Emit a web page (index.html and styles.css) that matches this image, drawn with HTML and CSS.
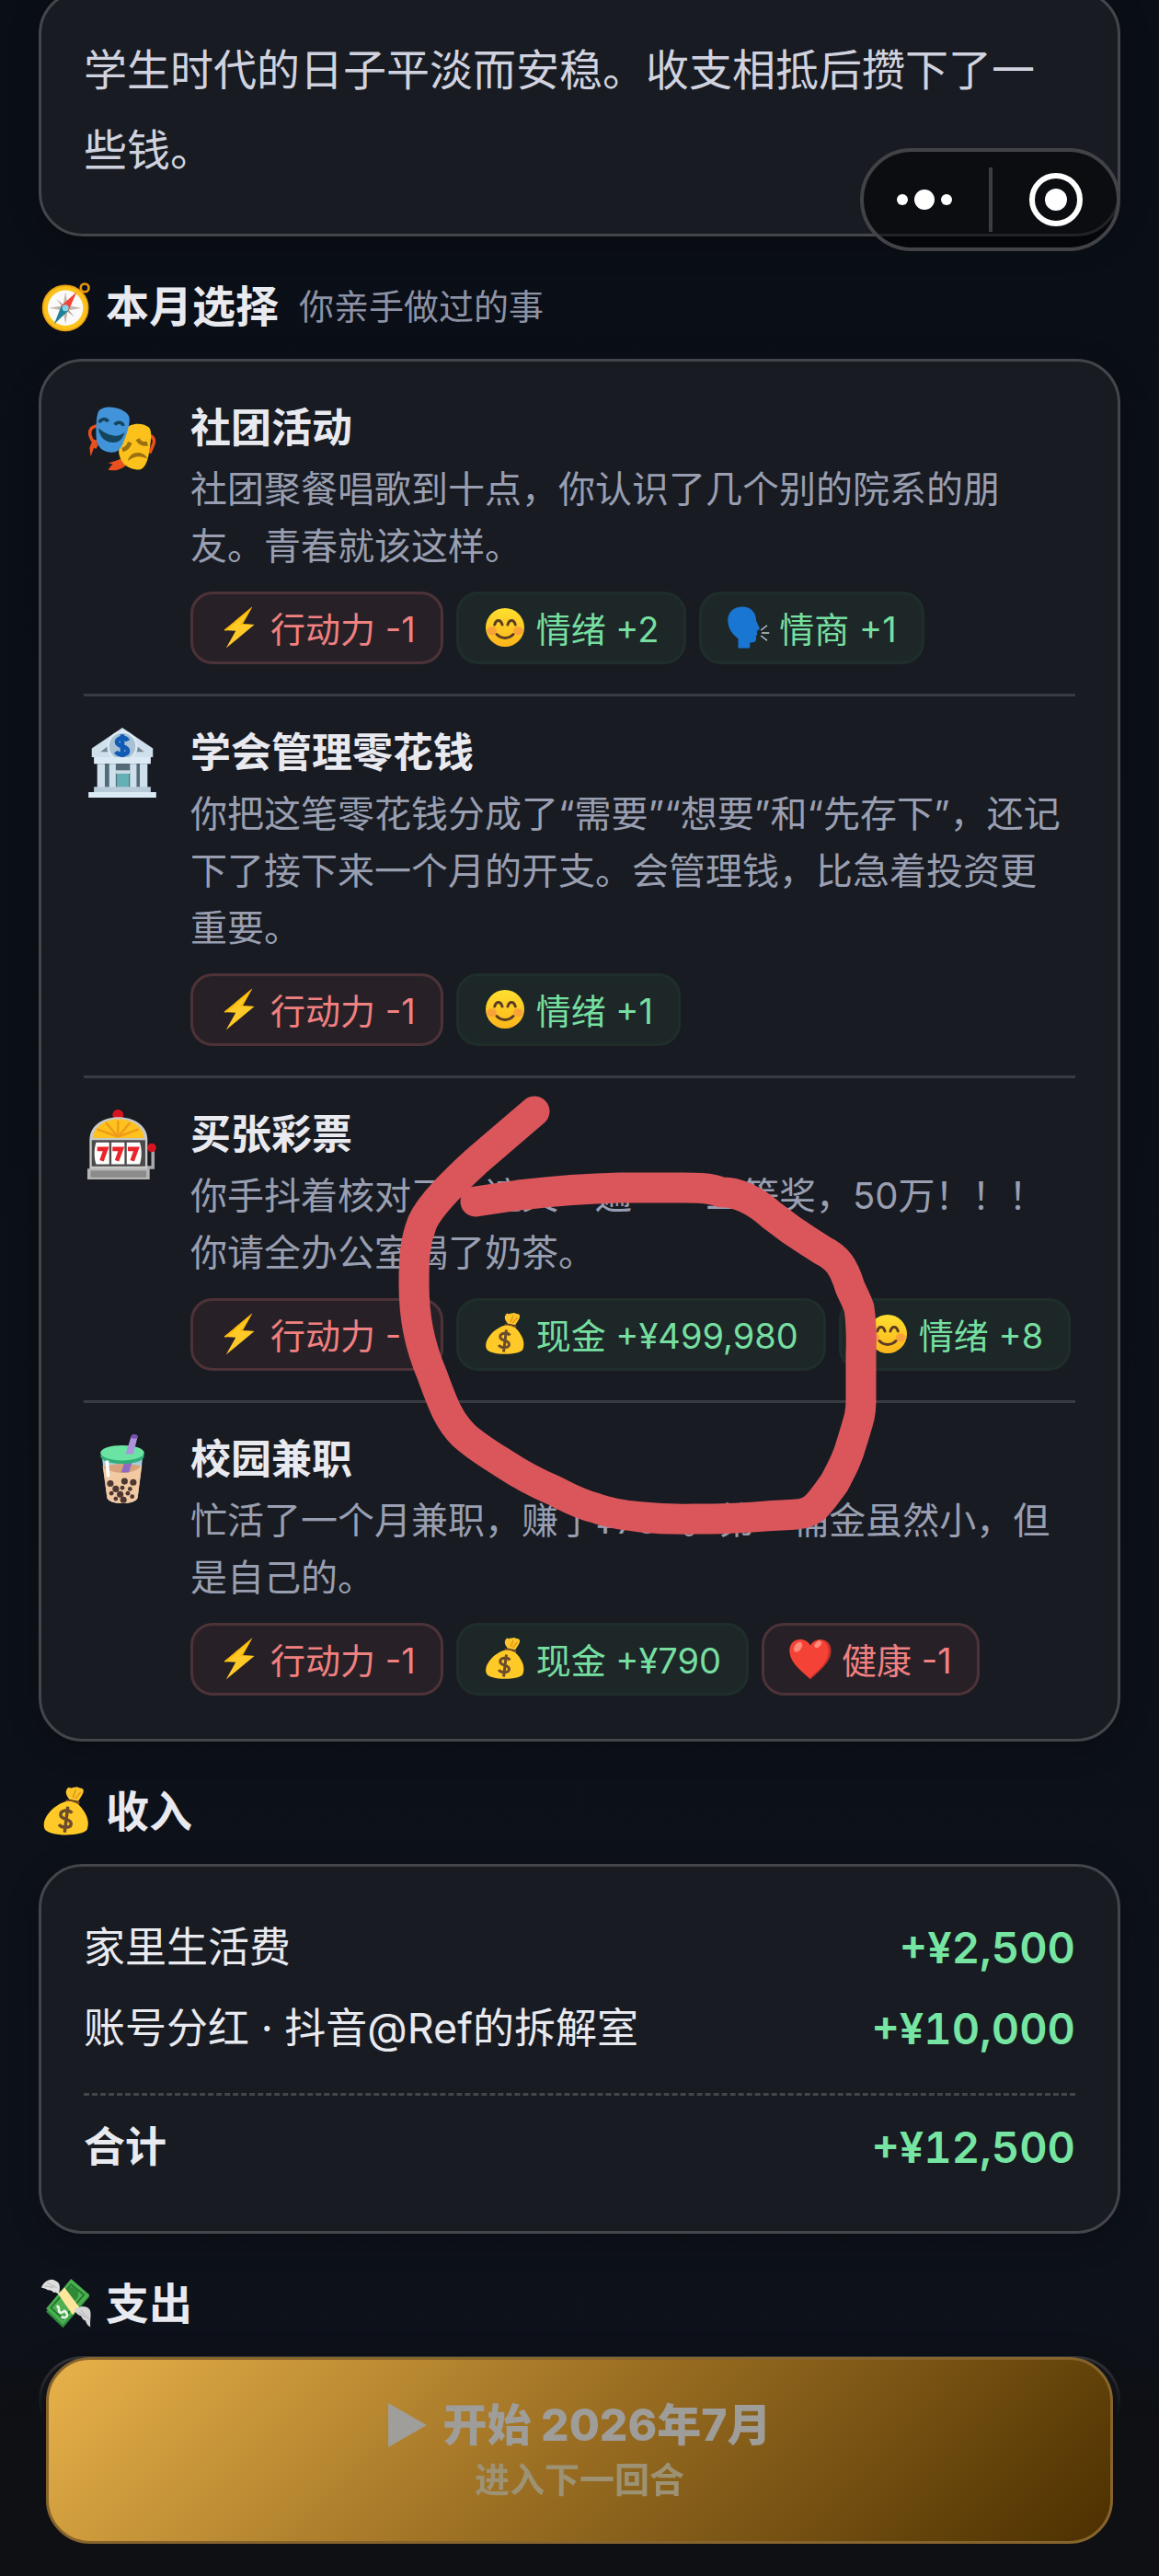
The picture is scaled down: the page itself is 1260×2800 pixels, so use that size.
FILE: index.html
```
<!DOCTYPE html>
<html lang="zh-CN">
<head>
    <meta charset="UTF-8">
    <meta name="viewport" content="width=device-width, initial-scale=1">
    <title>本月结算</title>
    <link rel="stylesheet" href="styles.css">
</head>
<body>
<!--图标-->
<svg class="sprite" aria-hidden="true">
    <defs>
        <linearGradient id="gold" x1="0" y1="0" x2="0" y2="1">
            <stop offset="0" stop-color="#ffdf2f"/>
            <stop offset="1" stop-color="#fbb41a"/>
        </linearGradient>
    </defs>
    <symbol id="i-compass" viewBox="0 0 64 64">
        <circle cx="55" cy="9" r="5" fill="none" stroke="#e8960c" stroke-width="3"/>
        <circle cx="31" cy="34" r="28" fill="#fcc21b"/>
        <circle cx="31" cy="34" r="28" fill="none" stroke="#eda312" stroke-width="2"/>
        <circle cx="31" cy="34" r="22" fill="#fafafa"/>
        <path d="M31 14l3 17 17 3-17 3-3 17-3-17-17-3 17-3z" fill="#c4b4a9"/>
        <path d="M20 23l10 8 1 3-3-1zM42 45l-8-10-3-1 1 3z" fill="#a99b92"/>
        <path d="M45 14L26 31l9 6z" fill="#f44336"/>
        <path d="M17 54l9-23 9 6z" fill="#1f8295"/>
        <circle cx="31" cy="34" r="4" fill="#82d5e8"/>
    </symbol>
    <symbol id="i-masks" viewBox="0 0 64 64">
        <path d="M10 21c-7 0-9 5-7 10 1 4 4 5 6 4M56 30c5 0 6 5 4 9l-3 7" fill="none" stroke="#e8501e" stroke-width="3"/>
        <path d="M5 33l5 5-2 4-2-1-3 8-1-8z" fill="#e8501e"/>
        <path d="M33 50c-5 2-10 4-14 5l4 1-4 5c6 2 12 0 18-5z" fill="#e8501e"/>
        <path d="M35 24c3-5 14-7 21-2 4 3 2 15 0 26-2 9-5 14-11 13-9-1-14-6-16-14-1-7 2-16 6-23z" fill="#fcc21b"/>
        <path d="M10 8c4-7 23-5 28 4 2 5-2 17-5 24-3 8-7 10-13 9-9-1-12-8-12-16 0-7 0-16 2-21z" fill="#4294da"/>
        <path d="M10 23c10 8 18 9 24 4-2 7-6 10-12 9-6 0-11-5-12-13z" fill="#15455e"/>
        <path d="M11 18c1-4 6-4 8-1M25 20c2-3 7-3 8 1" fill="none" stroke="#15455e" stroke-width="3"/>
        <path d="M32 43c4-1 6-4 7-7M46 33c2 4 6 5 9 4" fill="none" stroke="#9a7010" stroke-width="4"/>
        <path d="M37 53c2-9 14-10 18-2-6-3-12-3-18 2z" fill="#9a7010"/>
    </symbol>
    <symbol id="i-bank" viewBox="0 0 64 64">
        <path d="M32 0l28 19v8H4v-8z" fill="#cfdfec"/>
        <path d="M12 22l18-14v14zM52 22L34 8v14z" fill="#738793"/>
        <circle cx="32" cy="17" r="13" fill="#a8c2d3" stroke="#dcebf5" stroke-width="2"/>
        <path d="M37 12c-2-4-10-3-10 1 0 5 10 3 10 8 0 4-8 5-11 1M32 6v22" fill="none" stroke="#0f5bb5" stroke-width="4"/>
        <path d="M6 27h52v6H6z" fill="#dceaf5"/>
        <path d="M12 33h40v23H12z" fill="#546a76"/>
        <path d="M27 40h11v16H27z" fill="#63b0b5"/>
        <path d="M26 39h13v3H26z" fill="#c8dbe5"/>
        <path d="M9 33h7v23H9zM20 33h6v23h-6zM39 33h6v23h-6zM48 33h7v23h-7z" fill="#cfe0ed"/>
        <path d="M6 54h52v5H6z" fill="#b8cbd8"/>
        <path d="M1 59h62v5H1z" fill="#dceaf5"/>
    </symbol>
    <symbol id="i-slot" viewBox="0 0 64 64">
        <circle cx="28" cy="5" r="5" fill="#d8151f"/>
        <path d="M60 36v17h-8" fill="none" stroke="#a9a9a9" stroke-width="3"/>
        <circle cx="59" cy="35" r="4" fill="#d8151f"/>
        <path d="M2 28C2 0 55 0 55 28v28H2z" fill="#c9c9c9"/>
        <path d="M5 26c2-23 45-23 47 0z" fill="#fdc21d"/>
        <path d="M28 25V10M28 25L17 12M28 25l11-13M28 25L9 18M28 25l19-7" stroke="#f09a1a" stroke-width="2"/>
        <path d="M4 28h49v24H4z" fill="#4a4a4a"/>
        <path d="M8 30h12v20H8c-2-6-2-14 0-20zM22 30h12v20H22zM36 30h12c2 6 2 14 0 20H36z" fill="#fff"/>
        <path d="M9 36h8l-4 11M23 36h8l-4 11M37 36h8l-4 11" fill="none" stroke="#e9242a" stroke-width="4"/>
        <path d="M0 54h57v10H0z" fill="#b5b5b5"/>
        <path d="M3 56h51v6H3z" fill="#8b8b8b"/>
    </symbol>
    <symbol id="i-boba" viewBox="0 0 64 64">
        <path d="M13 18h38l-5 40c-2 7-26 7-28 0z" fill="#a5cde0"/>
        <path d="M14 29c12-3 26 3 36-1l-4 30c-2 7-26 7-28 0z" fill="#f2c9a2"/>
        <path d="M14 30c10-4 26-4 35-1-6 8-25 8-35 1z" fill="#d6a27c"/>
        <path d="M35 22h7l-4 13h-7z" fill="#8e6ac2"/>
        <ellipse cx="32" cy="20" rx="20" ry="7" fill="#2fae78"/>
        <ellipse cx="32" cy="17" rx="20" ry="7" fill="#6be3a2"/>
        <path d="M40 2h6l-4 16h-7z" fill="#ad93dc"/>
        <ellipse cx="43" cy="2" rx="3" ry="2" fill="#7a52b3"/>
        <path d="M18 24l1 15" stroke="#fff" stroke-width="3"/>
        <g fill="#4c3832">
            <circle cx="21" cy="45" r="3"/><circle cx="34" cy="43" r="3"/><circle cx="42" cy="44" r="3"/>
            <circle cx="26" cy="50" r="3"/><circle cx="32" cy="49" r="2"/><circle cx="39" cy="50" r="2"/>
            <circle cx="22" cy="54" r="2"/><circle cx="30" cy="55" r="3"/><circle cx="37" cy="54" r="2"/>
            <circle cx="26" cy="59" r="2"/><circle cx="33" cy="60" r="3"/><circle cx="41" cy="57" r="2"/>
        </g>
    </symbol>
    <symbol id="i-bolt" viewBox="0 0 64 64">
        <path d="M51 2L10 36l17 1-14 25 41-34-17-1z" fill="#ffca28"/>
        <path d="M51 2L10 36l3 1 34-29-14 20 21 0-17-1z" fill="#feb804"/>
    </symbol>
    <symbol id="i-smile" viewBox="0 0 64 64">
        <circle cx="32" cy="32" r="28" fill="url(#gold)"/>
        <ellipse cx="13" cy="37" rx="7" ry="6" fill="#f79344" opacity=".7"/>
        <ellipse cx="51" cy="37" rx="7" ry="6" fill="#f79344" opacity=".7"/>
        <path d="M17 28c2-8 9-8 11 0M36 28c2-8 9-8 11 0M20 42c7 7 17 7 24 0" fill="none" stroke="#5a3c24" stroke-width="4" stroke-linecap="round"/>
    </symbol>
    <symbol id="i-head" viewBox="0 0 64 64">
        <path d="M18 62V48C10 43 3 33 3 22 3 9 12 2 24 2s20 8 20 20l5 11c0 2-1 3-3 3l-1 3 1 3-2 2v5c0 4-3 5-9 5v8z" fill="#1976d2"/>
        <path d="M51 36l9-7M52 40h11M51 44l9 7" stroke="#c2c8cc" stroke-width="2"/>
    </symbol>
    <symbol id="i-bag" viewBox="0 0 64 64">
        <path d="M36 17C30 10 31 5 35 2c3 2 4 0 8 0 3-2 4 1 8 1 5 2 2 7-4 16z" fill="#fdc52b"/>
        <path d="M40 15l4-10M43 16l7-8" stroke="#e59b12" stroke-width="2"/>
        <path d="M32 17l17 3-2 5-17-3z" fill="#7a4a27"/>
        <path d="M30 20c6-2 11 0 17 3 9 9 15 20 11 31-3 9-49 10-53-1-4-12 10-28 25-33z" fill="#ffca28"/>
        <path d="M39 34c-3-5-14-4-14 2 0 7 13 4 13 11 0 6-12 6-15 1M34 26l-4 32" fill="none" stroke="#6d4c2b" stroke-width="4"/>
    </symbol>
    <symbol id="i-heart" viewBox="0 0 64 64">
        <path d="M32 62C21 51 2 38 2 20 2 1 25-1 32 13 39-1 62 1 62 20c0 18-19 31-30 42z" fill="#c9312b"/>
        <path d="M31 60C20 50 2 38 2 20 2 1 25-1 32 13 39 1 57 1 58 20c0 18-15 29-27 40z" fill="#f44336"/>
        <ellipse cx="14" cy="15" rx="5" ry="8" fill="#ff8a7a" transform="rotate(35 14 15)"/>
        <ellipse cx="43" cy="11" rx="4" ry="6" fill="#ff8a7a" transform="rotate(45 43 11)"/>
    </symbol>
    <symbol id="i-cash" viewBox="0 0 64 64">
        <path d="M7 42L38 3l23 20-33 39z" fill="#2e8b3c"/>
        <path d="M7 38L38 1l23 20-33 37z" fill="#4caf50"/>
        <path d="M13 37L38 8l16 13-26 30z" fill="none" stroke="#23772e" stroke-width="2"/>
        <ellipse cx="39" cy="20" rx="8" ry="9" fill="#2d8a38"/>
        <path d="M22 20l8-8 18 24-8 10z" fill="#fbe69b"/>
        <path d="M20 35c6 1 0 7 5 8s3-5 7 0-3 8-6 5" fill="none" stroke="#e8f5e9" stroke-width="3"/>
        <path d="M1 12c3-7 10-12 17-9 8 3 6 10 5 18-3-3-4-3-7-3-2-3-5-3-7-3-3-2-5-2-8-3z" fill="#e0e0e0"/>
        <path d="M42 40c6-6 15-6 19-1 3 5 0 13 1 22-4-2-5-5-6-8-4-1-4-4-6-6-4-1-6-4-8-7z" fill="#d5d5d5"/>
        <path d="M5 10l11 2M8 6l12 6M48 43l8 6M50 40l10 11" stroke="#aaa" stroke-width="1"/>
    </symbol>
</svg>

<main class="page">
    <section class="card story">
        <p>学生时代的日子平淡而安稳。收支相抵后攒下了一些钱。</p>
    </section>

    <h2 class="heading"><svg><use href="#i-compass"/></svg>本月选择<small>你亲手做过的事</small></h2>
    <section class="card choices">
        <article class="choice">
            <svg class="choice-icon"><use href="#i-masks"/></svg>
            <div class="choice-body">
                <h3>社团活动</h3>
                <p>社团聚餐唱歌到十点，你认识了几个别的院系的朋友。青春就该这样。</p>
                <div class="tags">
                    <span class="tag down"><svg><use href="#i-bolt"/></svg>行动力 -1</span>
                    <span class="tag up"><svg><use href="#i-smile"/></svg>情绪 +2</span>
                    <span class="tag up"><svg><use href="#i-head"/></svg>情商 +1</span>
                </div>
            </div>
        </article>
        <article class="choice">
            <svg class="choice-icon"><use href="#i-bank"/></svg>
            <div class="choice-body">
                <h3>学会管理零花钱</h3>
                <p>你把这笔零花钱分成了“需要”“想要”和“先存下”，还记下了接下来一个月的开支。会管理钱，比急着投资更重要。</p>
                <div class="tags">
                    <span class="tag down"><svg><use href="#i-bolt"/></svg>行动力 -1</span>
                    <span class="tag up"><svg><use href="#i-smile"/></svg>情绪 +1</span>
                </div>
            </div>
        </article>
        <article class="choice">
            <svg class="choice-icon"><use href="#i-slot"/></svg>
            <div class="choice-body">
                <h3>买张彩票</h3>
                <p>你手抖着核对了一遍又一遍——二等奖，50万！！！你请全办公室喝了奶茶。</p>
                <div class="tags">
                    <span class="tag down"><svg><use href="#i-bolt"/></svg>行动力 -1</span>
                    <span class="tag up"><svg><use href="#i-bag"/></svg>现金 +¥499,980</span>
                    <span class="tag up"><svg><use href="#i-smile"/></svg>情绪 +8</span>
                </div>
            </div>
            <!--手绘圈-->
            <svg class="scribble" viewBox="0 0 530 490" aria-hidden="true">
                <path d="M151 36L88 90C64 112 38 137 29 157C21 178 20 195 20 223C20 260 26 290 40 323C52 356 58 372 74 388C87 400 102 409 118 419C136 431 153 440 172 448C188 456 200 463 217 467C240 476 285 480 326 479C360 480 395 476 436 474C456 473 462 460 477 440C487 421 492 411 496 396C504 370 506 365 506 350V300C507 275 506 263 504 250C502 243 495 230 494 227C487 204 480 195 464 187C446 175 438 172 409 149C390 132 370 123 354 124C340 118 320 119 299 119H244C200 120 160 124 134 127L87 134"/>
            </svg>
        </article>
        <article class="choice">
            <svg class="choice-icon"><use href="#i-boba"/></svg>
            <div class="choice-body">
                <h3>校园兼职</h3>
                <p>忙活了一个月兼职，赚了¥790。第一桶金虽然小，但是自己的。</p>
                <div class="tags">
                    <span class="tag down"><svg><use href="#i-bolt"/></svg>行动力 -1</span>
                    <span class="tag up"><svg><use href="#i-bag"/></svg>现金 +¥790</span>
                    <span class="tag down"><svg><use href="#i-heart"/></svg>健康 -1</span>
                </div>
            </div>
        </article>
    </section>

    <h2 class="heading"><svg><use href="#i-bag"/></svg>收入</h2>
    <section class="card ledger">
        <dl>
            <div class="row"><dt>家里生活费</dt><dd>+¥2,500</dd></div>
            <div class="row"><dt>账号分红 · 抖音@Ref的拆解室</dt><dd>+¥10,000</dd></div>
            <div class="row total"><dt>合计</dt><dd>+¥12,500</dd></div>
        </dl>
    </section>

    <h2 class="heading"><svg><use href="#i-cash"/></svg>支出</h2>
    <section class="card ledger"></section>
</main>

<div class="capsule">
    <button type="button" aria-label="更多">
        <svg viewBox="0 0 60 60"><circle cx="6" cy="30" r="6"/><circle cx="30" cy="30" r="11"/><circle cx="54" cy="30" r="6"/></svg>
    </button>
    <button type="button" aria-label="关闭">
        <svg viewBox="0 0 60 60"><circle cx="30" cy="30" r="26" fill="none" stroke="#fff" stroke-width="6"/><circle cx="30" cy="30" r="12"/></svg>
    </button>
</div>

<footer class="bottom-bar">
    <button type="button" class="next">
        <span class="next-title"><svg viewBox="0 0 40 46"><path d="M0 0l40 23L0 46z"/></svg>开始 2026年7月</span>
        <span class="next-sub">进入下一回合</span>
    </button>
</footer>
</body>
</html>
```
FILE: styles.css
```
* {
    margin: 0;
    padding: 0;
    box-sizing: border-box;
}

body {
    height: 100vh;
    overflow: hidden;
    background: linear-gradient(#0a0e16, #0c1018 60%, #0e121b);
    color: #e9eaf0;
    font-family: Inter, "Noto Sans CJK SC", sans-serif;
}

button {
    border: none;
    background: none;
    font: inherit;
    cursor: pointer;
}

.sprite {
    position: absolute;
    width: 0;
    height: 0;
}

/* 列表已向上滚动一点 */
.page {
    margin-top: -11px;
    padding: 0 42px;
}

.card {
    padding: 0 46px;
    border: 3px solid #44464b;
    border-radius: 48px;
    background: #181b22;
    box-shadow: 0 8px 32px rgba(0, 0, 0, .25);
}

.story {
    padding-top: 40px;
    padding-bottom: 48px;
    color: #d0d3df;
    font-size: 47px;
    line-height: 87px;
}

.heading {
    display: flex;
    align-items: center;
    margin: 44px 0 25px;
    font-size: 47px;
    line-height: 64px;
}

.heading svg {
    width: 56px;
    height: 56px;
    margin: 0 15px 0 2px;
}

.heading small {
    margin-left: 22px;
    color: #8d92a5;
    font-size: 38px;
    font-weight: 400;
}

.choices {
    padding-top: 11px;
    padding-bottom: 15px;
}

.choice {
    position: relative;
    display: flex;
    gap: 32px;
    padding: 30px 0 32px;
}

.choice + .choice {
    border-top: 3px solid #393b42;
}

.choice-icon {
    flex: none;
    width: 84px;
    height: 84px;
    padding: 4px;
}

.choice-body {
    flex: 1;
}

.choice h3 {
    font-size: 44px;
    line-height: 62px;
}

.choice p {
    margin: 5px 4px 18px 0;
    color: #999fb1;
    font-size: 40px;
    line-height: 62px;
}

.tags {
    display: flex;
    flex-wrap: wrap;
    gap: 14px;
}

.tag {
    display: flex;
    align-items: center;
    height: 79px;
    padding: 0 27px 2px 26px;
    border: 3px solid;
    border-radius: 24px;
    font-size: 38px;
    white-space: nowrap;
}

.tag svg {
    width: 48px;
    height: 48px;
    margin-right: 10px;
}

.up {
    border-color: #1f2e2b;
    background: #1d2728;
    color: #76dfa0;
}

.down {
    border-color: #4d3338;
    background: #272127;
    color: #f18080;
}

.scribble {
    position: absolute;
    top: 0;
    left: 339px;
    width: 530px;
    height: 490px;
    z-index: 1;
    overflow: visible;
    pointer-events: none;
}

.scribble path {
    fill: none;
    stroke: #db565b;
    stroke-width: 33;
    stroke-linecap: round;
    stroke-linejoin: round;
}

.ledger {
    padding-top: 44px;
    padding-bottom: 47px;
}

.row {
    display: flex;
    align-items: center;
    justify-content: space-between;
    font-size: 45px;
    line-height: 88px;
}

.row dd {
    color: #76e5a2;
    font-size: 47px;
    font-weight: 600;
    font-variant-numeric: tabular-nums;
}

.total {
    margin-top: 26px;
    padding-top: 12px;
    border-top: 3px dashed #44464b;
}

.total dt {
    font-weight: 700;
}

.capsule {
    position: fixed;
    top: 161px;
    right: 42px;
    display: flex;
    align-items: center;
    width: 283px;
    height: 112px;
    border: 4px solid #424347;
    border-radius: 56px;
    background: rgba(0, 0, 0, .5);
    z-index: 2;
}

.capsule button {
    display: flex;
    flex: 1;
    align-items: center;
    justify-content: center;
    height: 70px;
    padding-right: 4px;
}

.capsule button + button {
    padding: 0 0 0 4px;
    border-left: 4px solid #3c3d40;
}

.capsule svg {
    width: 60px;
    height: 60px;
    fill: #fff;
}

.bottom-bar {
    position: fixed;
    right: 0;
    bottom: 0;
    left: 0;
    padding: 34px 50px 35px;
    background: linear-gradient(transparent, #0e1013 100px);
    z-index: 2;
}

.next {
    display: flex;
    flex-direction: column;
    align-items: center;
    justify-content: center;
    width: 100%;
    height: 203px;
    border: 3px solid #86642c;
    border-radius: 48px;
    background: linear-gradient(135deg, #e8b24a, #a07325 45%, #4c3000);
    color: #9f9d99;
}

.next-title {
    display: flex;
    align-items: center;
    font-size: 48px;
    font-weight: 800;
    line-height: 62px;
}

.next-title svg {
    width: 42px;
    height: 48px;
    margin-right: 18px;
    fill: #a09e9b;
}

.next-sub {
    color: #9d9274;
    font-size: 38px;
    font-weight: 700;
    line-height: 56px;
}
```
